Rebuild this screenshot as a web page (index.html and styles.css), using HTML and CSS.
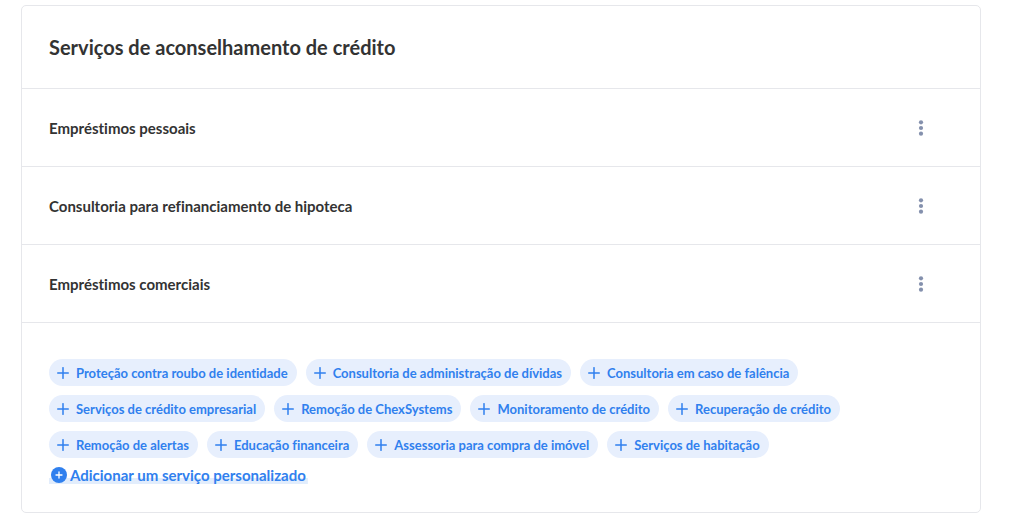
FILE: index.html
```
<!DOCTYPE html>
<html lang="pt-BR">
<head>
    <meta charset="UTF-8">
    <meta name="viewport" content="width=device-width, initial-scale=1.0">
    <title>Serviços de aconselhamento de crédito</title>
    <link rel="stylesheet" href="styles.css">
</head>
<body>

    <!-- Shared icons -->
    <svg class="icon-defs" aria-hidden="true">
        <symbol id="plus" viewBox="0 0 12 12">
            <path d="M6 .7v10.6M.7 6h10.6" fill="none" stroke="currentColor" stroke-width="1.5" stroke-linecap="round"/>
        </symbol>
        <symbol id="dots" viewBox="0 0 6 16">
            <circle cx="3" cy="2.3" r="2.1"/>
            <circle cx="3" cy="8" r="2.1"/>
            <circle cx="3" cy="13.7" r="2.1"/>
        </symbol>
    </svg>

    <main class="card">
        <h1 class="card-title">Serviços de aconselhamento de crédito</h1>

        <!-- Selected services -->
        <ul class="service-list">
            <li class="service">
                <h2>Empréstimos pessoais</h2>
                <button type="button" class="menu-button" aria-label="Opções de Empréstimos pessoais"><svg><use href="#dots"/></svg></button>
            </li>
            <li class="service">
                <h2>Consultoria para refinanciamento de hipoteca</h2>
                <button type="button" class="menu-button" aria-label="Opções de Consultoria para refinanciamento de hipoteca"><svg><use href="#dots"/></svg></button>
            </li>
            <li class="service">
                <h2>Empréstimos comerciais</h2>
                <button type="button" class="menu-button" aria-label="Opções de Empréstimos comerciais"><svg><use href="#dots"/></svg></button>
            </li>
        </ul>

        <!-- Suggested services -->
        <div class="suggestions">
            <div class="chips">
                <button type="button" class="chip"><svg><use href="#plus"/></svg>Proteção contra roubo de identidade</button>
                <button type="button" class="chip"><svg><use href="#plus"/></svg>Consultoria de administração de dívidas</button>
                <button type="button" class="chip"><svg><use href="#plus"/></svg>Consultoria em caso de falência</button>
                <button type="button" class="chip"><svg><use href="#plus"/></svg>Serviços de crédito empresarial</button>
                <button type="button" class="chip"><svg><use href="#plus"/></svg>Remoção de ChexSystems</button>
                <button type="button" class="chip"><svg><use href="#plus"/></svg>Monitoramento de crédito</button>
                <button type="button" class="chip"><svg><use href="#plus"/></svg>Recuperação de crédito</button>
                <button type="button" class="chip"><svg><use href="#plus"/></svg>Remoção de alertas</button>
                <button type="button" class="chip"><svg><use href="#plus"/></svg>Educação financeira</button>
                <button type="button" class="chip"><svg><use href="#plus"/></svg>Assessoria para compra de imóvel</button>
                <button type="button" class="chip"><svg><use href="#plus"/></svg>Serviços de habitação</button>
            </div>
            <a href="#" class="custom-link">
                <svg viewBox="0 0 16 16" aria-hidden="true">
                    <circle cx="8" cy="8" r="8" fill="currentColor"/>
                    <path d="M8 5v6M5 8h6" stroke="#fff" stroke-width="1.3" stroke-linecap="round"/>
                </svg>
                Adicionar um serviço personalizado
            </a>
        </div>
    </main>

</body>
</html>
```
FILE: styles.css
```
* {
    box-sizing: border-box;
}

body {
    margin: 0;
    padding: 5px 43px 5px 21px;
    background-color: #fff;
    color: #333;
    font-family: Lato, sans-serif;
    font-weight: bold;
    font-variant-ligatures: none;
}

button {
    border: none;
    font: inherit;
    font-variant-ligatures: none;
    cursor: pointer;
}

.icon-defs {
    display: none;
}

.card {
    border: 1px solid #e6e7eb;
    border-radius: 5px;
}

.card-title {
    margin: 0;
    padding: 28px 27px;
    font-size: 20px;
    line-height: 26px;
}

/* Service rows */
.service-list {
    margin: 0;
    padding: 0;
    list-style: none;
}

.service {
    display: flex;
    align-items: center;
    justify-content: space-between;
    height: 78px;
    padding: 0 51px 0 27px;
    border-top: 1px solid #e6e7eb;
}

.service h2 {
    margin: 0;
    font-size: 15px;
    line-height: 24px;
}

.menu-button {
    display: flex;
    padding: 5px;
    background: none;
    color: #8490ad;
}

.menu-button svg {
    width: 6px;
    height: 16px;
    fill: currentColor;
}

/* Suggested services */
.suggestions {
    padding: 36px 27px 26px;
    border-top: 1px solid #e6e7eb;
}

.chips {
    display: flex;
    flex-wrap: wrap;
    gap: 9px;
    max-width: 800px;
    margin-bottom: 8px;
}

.chip {
    display: flex;
    align-items: center;
    gap: 7px;
    height: 27px;
    padding: 0 9px 0 8px;
    border-radius: 14px;
    background-color: #e7effd;
    color: #3080ee;
    font-size: 13px;
    line-height: 20px;
}

.chip svg {
    width: 12px;
    height: 12px;
}

.custom-link {
    display: inline-flex;
    align-items: center;
    gap: 3px;
    padding: 0 2px;
    background: linear-gradient(#e2edfc, #e2edfc) bottom / 100% 6px no-repeat;
    color: #3080ee;
    font-size: 15px;
    line-height: 18px;
    text-decoration: none;
}

.custom-link svg {
    width: 16px;
    height: 16px;
}
```
